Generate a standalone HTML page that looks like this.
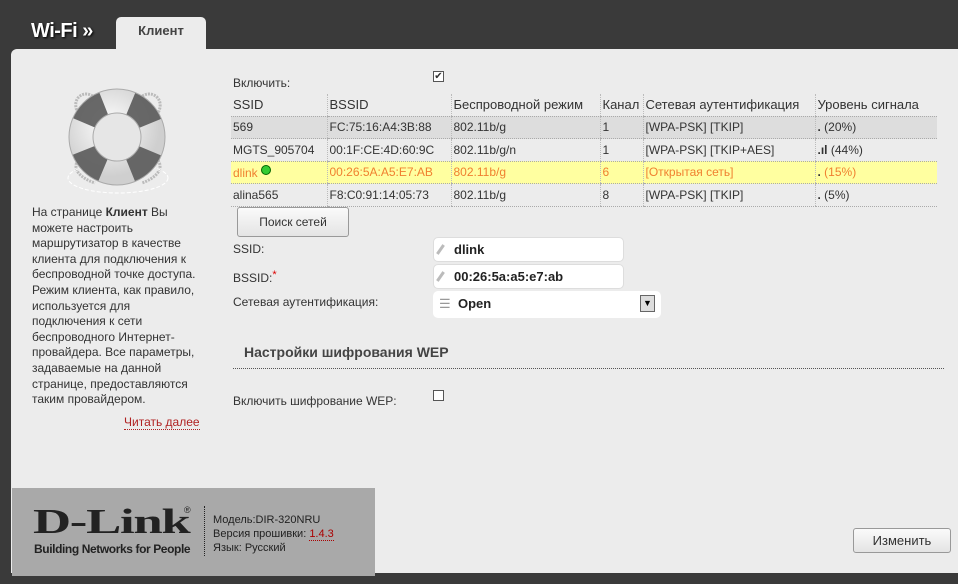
<!DOCTYPE html>
<html><head><meta charset="utf-8"><style>
*{margin:0;padding:0;box-sizing:border-box}
body{width:958px;height:584px;overflow:hidden;background:#3a3a3a;font-family:"Liberation Sans",Arial,sans-serif;font-size:12px;color:#333;position:relative}
.a{position:absolute}
#panel{left:11px;top:49px;width:960px;height:524px;background:#ececec;border-radius:6px 0 0 0}
#tab{left:116px;top:17px;width:90px;height:33px;background:#ececec;border-radius:5px 5px 0 0;font-weight:bold;font-size:13px;color:#444;text-align:center;line-height:28px}
#title{left:31px;top:20px;font-size:20px;font-weight:bold;color:#fff;text-shadow:1px 1px 2px #000;letter-spacing:-0.5px}
table{border-collapse:collapse;position:absolute;left:231px;top:94px;width:706px}
td{height:22.5px;padding:0 2px;font-size:12px;color:#333;border-bottom:1px dotted #aaa;border-left:1px dotted #bbb;white-space:nowrap}
td:first-child{border-left:none}
tr.h td{font-size:13px;color:#333;height:22px}
tr.g td{background:#ddd}
tr.y td{background:#ffffa0;color:#f08030}
.in{position:absolute;background:#fff;border-radius:5px;border:1px solid #ddd;height:25px;font-weight:bold;font-size:13px;color:#222;line-height:23px;padding-left:20px}
.btn{position:absolute;border:1px solid #999;border-radius:3px;background:linear-gradient(#fafafa,#e4e4e4);text-align:center;font-size:12px;color:#333}
.lbl{position:absolute;font-size:12px;color:#333}
.pen{position:absolute;left:5px;top:6px;width:3px;height:11px;background:#bbb;transform:rotate(35deg)}
</style></head><body>
<div id="title" class="a">Wi-Fi »</div>
<div id="tab" class="a">Клиент</div>
<div id="panel" class="a"></div>
<svg class="a" style="left:60px;top:78px" width="116" height="118" viewBox="0 0 116 118">
<defs><radialGradient id="g" cx="0.4" cy="0.35" r="0.7"><stop offset="0" stop-color="#fff"/><stop offset="1" stop-color="#cfcfcf"/></radialGradient></defs>
<path d="M35 20 C25 10 10 20 18 35 M80 20 C90 10 106 20 98 35 M20 80 C10 90 20 100 35 105 M96 80 C106 90 96 100 82 105" fill="none" stroke="#bbb" stroke-width="3" stroke-dasharray="2 1"/>
<ellipse cx="58" cy="100" rx="50" ry="15" fill="none" stroke="#fff" stroke-dasharray="4 2"/>
<circle cx="57" cy="59" r="36" fill="none" stroke="url(#g)" stroke-width="24"/>
<circle cx="57" cy="59" r="36" fill="none" stroke="#5a5a5a" stroke-width="24" stroke-dasharray="28.3 28.3" transform="rotate(-67.5 57 59)" opacity="0.9"/>
<circle cx="57" cy="59" r="48" fill="none" stroke="#aaa" stroke-width="1"/>
<circle cx="57" cy="59" r="24" fill="#e6e6e6" stroke="#aaa"/>
</svg>
<div class="a" style="left:32px;top:205px;width:175px;font-size:12px;line-height:15.6px;color:#333">На странице <b>Клиент</b> Вы можете настроить маршрутизатор в качестве клиента для подключения к беспроводной точке доступа. Режим клиента, как правило, используется для подключения к сети беспроводного Интернет-провайдера. Все параметры, задаваемые на данной странице, предоставляются таким провайдером.</div>
<div class="a" style="left:124px;top:415px;color:#b02020;border-bottom:1px dotted #b02020;line-height:14px">Читать далее</div>
<div class="lbl" style="left:233px;top:76px">Включить:</div>
<div class="a" style="left:433px;top:71px;width:11px;height:11px;border:1px solid #555;background:#fff;font-size:10px;line-height:9px;text-align:center">✔</div>
<table>
<tr class="h"><td style="width:96px">SSID</td><td style="width:124px">BSSID</td><td style="width:149px">Беспроводной режим</td><td style="width:43px">Канал</td><td style="width:172px">Сетевая аутентификация</td><td>Уровень сигнала</td></tr>
<tr class="g"><td>569</td><td>FC:75:16:A4:3B:88</td><td>802.11b/g</td><td>1</td><td>[WPA-PSK] [TKIP]</td><td><b>.</b> (20%)</td></tr>
<tr><td>MGTS_905704</td><td>00:1F:CE:4D:60:9C</td><td>802.11b/g/n</td><td>1</td><td>[WPA-PSK] [TKIP+AES]</td><td><b>.ıl</b> (44%)</td></tr>
<tr class="y"><td>dlink <span style="display:inline-block;width:10px;height:10px;border-radius:50%;background:#3c3;border:1px solid #060;vertical-align:2px"></span></td><td>00:26:5A:A5:E7:AB</td><td>802.11b/g</td><td>6</td><td>[Открытая сеть]</td><td><b style="color:#333">.</b> (15%)</td></tr>
<tr><td>alina565</td><td>F8:C0:91:14:05:73</td><td>802.11b/g</td><td>8</td><td>[WPA-PSK] [TKIP]</td><td><b>.</b> (5%)</td></tr>
</table>
<div class="btn" style="left:237px;top:207px;width:112px;height:30px;line-height:28px">Поиск сетей</div>
<div class="lbl" style="left:233px;top:242px">SSID:</div>
<div class="lbl" style="left:233px;top:269px">BSSID:<span style="color:#d00;vertical-align:4px;font-size:11px">*</span></div>
<div class="lbl" style="left:233px;top:295px">Сетевая аутентификация:</div>
<div class="in" style="left:433px;top:237px;width:191px"><i class="pen"></i>dlink</div>
<div class="in" style="left:433px;top:264px;width:191px"><i class="pen"></i>00:26:5a:a5:e7:ab</div>
<div class="in" style="left:433px;top:291px;width:228px;height:27px;line-height:25px;padding-left:25px;border:none"><span style="position:absolute;left:6px;top:0;font-size:13px;color:#999;font-weight:normal">☰</span>Open<span style="position:absolute;right:6px;top:4px;width:15px;height:17px;border:1px solid #666;background:#ddd;font-size:9px;line-height:15px;text-align:center;color:#000">▼</span></div>
<div class="a" style="left:244px;top:344px;font-size:14px;font-weight:bold;color:#444">Настройки шифрования WEP</div>
<div class="a" style="left:233px;top:368px;width:711px;border-top:1px dotted #555"></div>
<div class="lbl" style="left:233px;top:394px">Включить шифрование WEP:</div>
<div class="a" style="left:433px;top:390px;width:11px;height:11px;border:1px solid #555;background:#fff"></div>
<div class="btn" style="left:853px;top:528px;width:98px;height:25px;line-height:23px;font-size:13px">Изменить</div>
<div class="a" style="left:12px;top:488px;width:363px;height:88px;background:#a9a9a9"></div>
<div class="a" style="left:33px;top:504px;font-family:'Liberation Serif',serif;font-size:40px;font-weight:bold;color:#222;letter-spacing:-1px;line-height:40px;transform:scale(1.32,0.88);transform-origin:0 0;white-space:nowrap">D-Link</div>
<div class="a" style="left:184px;top:505px;font-size:9px;color:#222">®</div>
<div class="a" style="left:34px;top:542px;font-size:12px;font-weight:bold;color:#222;letter-spacing:-0.4px;white-space:nowrap">Building Networks for People</div>
<div class="a" style="left:204px;top:506px;height:50px;border-left:1px dotted #222"></div>
<div class="a" style="left:213px;top:513px;font-size:11px;line-height:14px;color:#222">Модель:DIR-320NRU<br>Версия прошивки: <span style="color:#a00;border-bottom:1px dotted #a00">1.4.3</span><br>Язык: Русский</div>
</body></html>
